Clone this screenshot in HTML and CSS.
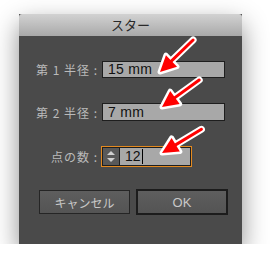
FILE: index.html
```html
<!DOCTYPE html>
<html lang="ja">
<head>
  <meta charset="UTF-8">
  <title>スター</title>
  <link rel="stylesheet" href="styles.css">
</head>
<body>
  <div class="dialog">
    <div class="titlebar">スター</div>
    <div class="content">
      <div class="row">
        <label class="label">第 1 半径 :</label>
        <div class="field">15 mm</div>
      </div>
      <div class="row">
        <label class="label">第 2 半径 :</label>
        <div class="field">7 mm</div>
      </div>
      <div class="row">
        <label class="label">点の数 :</label>
        <div class="spin-field">
          <div class="spinner">
            <span class="up"></span>
            <span class="down"></span>
          </div>
          <div class="spin-value">12<span class="caret"></span></div>
        </div>
      </div>
      <div class="buttons">
        <button class="btn">キャンセル</button>
        <button class="btn btn-default">OK</button>
      </div>
    </div>
  </div>

  <!-- red callout arrows drawn over the dialog -->
  <svg class="arrows" width="270" height="269" viewBox="0 0 270 269">
    <defs>
      <g id="arrow-white">
        <line x1="10" y1="0" x2="46" y2="0" stroke="#fff" stroke-width="7" stroke-linecap="round"/>
        <polygon points="0,0 16,-8 16,8" fill="#fff" stroke="#fff" stroke-width="5" stroke-linejoin="round"/>
      </g>
      <g id="arrow-red">
        <line x1="10" y1="0" x2="46" y2="0" stroke="#f00" stroke-width="3" stroke-linecap="round"/>
        <polygon points="0,0 16,-8 16,8" fill="#f00"/>
      </g>
    </defs>
    <g transform="translate(160 72) rotate(-44)">
      <use href="#arrow-white"/><use href="#arrow-red"/>
    </g>
    <g transform="translate(162 107) rotate(-36)">
      <use href="#arrow-white"/><use href="#arrow-red"/>
    </g>
    <g transform="translate(162 153) rotate(-31)">
      <use href="#arrow-white"/><use href="#arrow-red"/>
    </g>
  </svg>
</body>
</html>
```

FILE: styles.css
```css
body {
  margin: 0;
  padding: 0;
  background: #fff;
  font-family: "Noto Sans CJK JP", "Liberation Sans", sans-serif;
}

.dialog {
  margin: 14px 0 0 19px;
  width: 223px;
  height: 230px;
  background: #4a4a4a;
  box-shadow: 0 10px 24px rgba(0, 0, 0, 0.45);
  display: flex;
  flex-direction: column;
}

.titlebar {
  height: 22px;
  line-height: 22px;
  text-align: center;
  font-size: 13px;
  color: #2a2a2a;
  background: linear-gradient(#d2d2d2, #a9a9a9);
  border-top-left-radius: 3px;
  border-top-right-radius: 3px;
}

.content {
  display: flex;
  flex-direction: column;
  padding-top: 25px;
}

.row {
  display: flex;
  align-items: center;
  margin-bottom: 25px;
}

.label {
  width: 83px;
  padding-right: 4px;
  box-sizing: border-box;
  text-align: right;
  font-size: 12px;
  color: #bababa;
  letter-spacing: 1px;
  white-space: nowrap;
}

.field {
  width: 123px;
  height: 17px;
  box-sizing: border-box;
  border: 1px solid #1e1e1e;
  background: #a8a8a8;
  color: #111;
  font-size: 14px;
  line-height: 15px;
  padding-left: 5px;
  letter-spacing: 0.3px;
  font-family: "Liberation Sans", sans-serif;
}

.row:nth-child(2) .field {
  height: 18px;
  line-height: 16px;
}

.row:nth-child(3) {
  margin-bottom: 23px;
}

.spin-field {
  width: 91px;
  height: 21px;
  box-sizing: border-box;
  margin-left: -1px;
  border: 1px solid #e48a1f;
  display: flex;
}

.spinner {
  width: 16px;
  background: #595959;
  border: 1px solid #1e1e1e;
  border-right: none;
  display: flex;
  flex-direction: column;
  align-items: center;
  justify-content: center;
  gap: 3px;
}

.up, .down {
  width: 0;
  height: 0;
  border-left: 4px solid transparent;
  border-right: 4px solid transparent;
}

.up {
  border-bottom: 4px solid #cfcfcf;
}

.down {
  border-top: 4px solid #cfcfcf;
}

.spin-value {
  flex: 1;
  background: #a8a8a8;
  border: 1px solid #1e1e1e;
  padding-left: 5px;
  font-family: "Liberation Sans", sans-serif;
  font-size: 14px;
  line-height: 17px;
  color: #111;
  display: flex;
  align-items: center;
}

.caret {
  display: inline-block;
  width: 1px;
  height: 15px;
  background: #000;
  margin-left: 1px;
}

.buttons {
  display: flex;
  gap: 6px;
  padding-left: 20px;
}

.btn {
  width: 91px;
  height: 24px;
  padding: 0;
  background: linear-gradient(#5e5e5e, #545454);
  border: 1px solid #252525;
  color: #c8c8c8;
  font-family: "Noto Sans CJK JP", "Liberation Sans", sans-serif;
  font-size: 12px;
}

.btn-default {
  width: 92px;
  height: 26px;
  margin-top: -1px;
  border: 2px solid #1c1c1c;
  font-family: "Liberation Sans", sans-serif;
  font-size: 13px;
}

.arrows {
  position: absolute;
  top: 0;
  left: 0;
  pointer-events: none;
}
```
